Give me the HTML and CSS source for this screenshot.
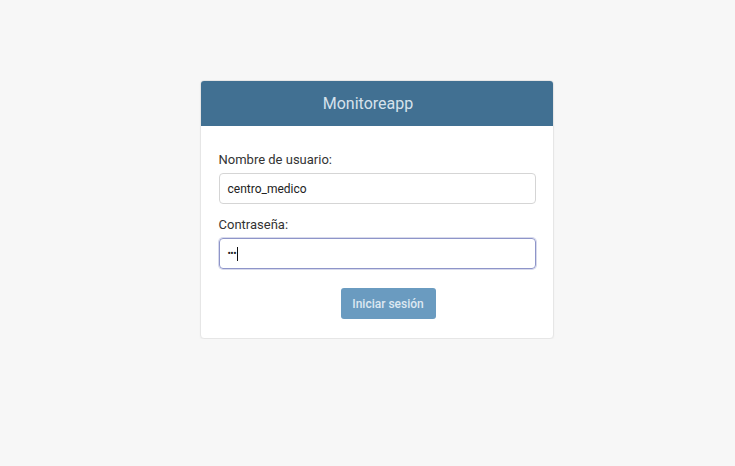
FILE: index.html
```html
<!DOCTYPE html>
<html lang="es">
<head>
<meta charset="utf-8">
<title>Monitoreapp</title>
<link rel="stylesheet" href="styles.css">
</head>
<body>
<main class="page">
  <section class="card">
    <header class="card-header">Monitoreapp</header>
    <form class="card-body">
      <label class="label" for="user">Nombre de usuario:</label>
      <div class="input" id="user">centro_medico</div>
      <label class="label" for="pass">Contraseña:</label>
      <div class="input input-focus" id="pass"><span class="dots">•••</span><span class="caret"></span></div>
      <div class="actions">
        <button type="button" class="btn">Iniciar sesión</button>
      </div>
    </form>
  </section>
</main>
</body>
</html>
```
FILE: styles.css
```css
html, body {
  margin: 0;
  padding: 0;
  background: #f7f7f7;
  font-family: Roboto, "Liberation Sans", Arial, sans-serif;
}
.page {
  display: flex;
  justify-content: center;
  padding-top: 80px;
  padding-left: 18px;
}
.card {
  width: 354px;
  flex-shrink: 0;
  background: #fff;
  border: 1px solid #e6e6e6;
  border-radius: 4px;
  box-sizing: border-box;
  box-shadow: 0 1px 2px rgba(0,0,0,0.04);
  overflow: hidden;
}
.card-header {
  background: #417092;
  color: #d6e2ec;
  height: 45px;
  display: flex;
  align-items: center;
  justify-content: center;
  padding-right: 17px;
  font-size: 16px;
  font-weight: 400;
}
.card-body {
  display: flex;
  flex-direction: column;
  padding: 26px 17px 19px 18px;
}
.label {
  font-size: 13px;
  color: #333;
  line-height: 16px;
  margin-bottom: 5px;
}
.input {
  height: 31px;
  box-sizing: border-box;
  border: 1px solid #d5d5d5;
  border-radius: 4px;
  padding: 0 8px;
  display: flex;
  align-items: center;
  font-size: 12px;
  color: #222;
  margin-bottom: 13px;
}
.input-focus {
  border-color: #8e95c9;
  box-shadow: 0 0 0 1px rgba(142,149,201,0.35);
  margin-bottom: 19px;
}
.dots {
  font-size: 10px;
  letter-spacing: -0.5px;
  color: #222;
}
.caret {
  display: inline-block;
  width: 1px;
  height: 14px;
  background: #111;
  margin-left: 1px;
}
.actions {
  display: flex;
  justify-content: center;
  padding-left: 22px;
}
.btn {
  width: 95px;
  height: 31px;
  border: none;
  border-radius: 3px;
  background: #6a9bc0;
  color: #dde8f2;
  font-family: Roboto, "Liberation Sans", Arial, sans-serif;
  font-size: 12px;
  font-weight: 500;
  padding: 0;
}
```
